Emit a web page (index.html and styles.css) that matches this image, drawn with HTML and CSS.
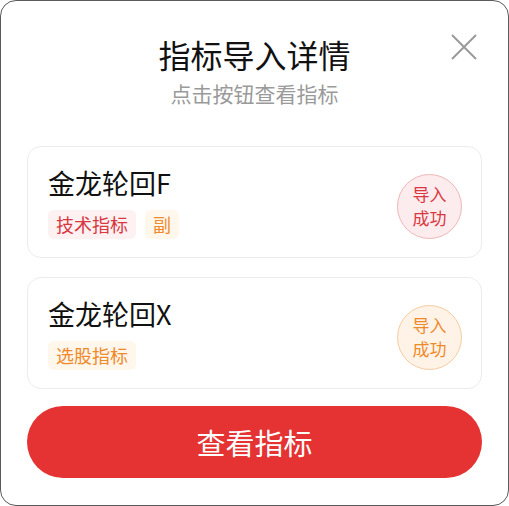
FILE: index.html
```html
<!DOCTYPE html>
<html lang="zh-CN">
<head>
    <meta charset="UTF-8">
    <meta name="viewport" content="width=device-width, initial-scale=1.0">
    <title>指标导入详情</title>
    <link rel="stylesheet" href="styles.css">
</head>
<body>
    <div class="dialog">
        <!-- 标题 -->
        <div class="dialog-header">
            <div class="dialog-title">指标导入详情</div>
            <div class="dialog-subtitle">点击按钮查看指标</div>
            <button class="close-btn" aria-label="关闭">
                <svg width="26" height="26" viewBox="0 0 26 26">
                    <path d="M1 1 L25 25 M25 1 L1 25" stroke="#9a9a9a" stroke-width="2" fill="none"/>
                </svg>
            </button>
        </div>

        <!-- 指标列表 -->
        <div class="indicator-list">
            <div class="indicator-card">
                <div class="indicator-info">
                    <div class="indicator-name">金龙轮回F</div>
                    <div class="tag-row">
                        <span class="tag tag-red">技术指标</span>
                        <span class="tag tag-orange">副</span>
                    </div>
                </div>
                <div class="status status-red">导入<br>成功</div>
            </div>

            <div class="indicator-card">
                <div class="indicator-info">
                    <div class="indicator-name">金龙轮回X</div>
                    <div class="tag-row">
                        <span class="tag tag-orange">选股指标</span>
                    </div>
                </div>
                <div class="status status-orange">导入<br>成功</div>
            </div>
        </div>

        <button class="view-btn">查看指标</button>
    </div>
</body>
</html>
```

FILE: styles.css
```css
* {
    margin: 0;
    padding: 0;
    box-sizing: border-box;
    font-family: 'Noto Sans CJK SC', 'Noto Sans', sans-serif;
}

body {
    background-color: #ffffff;
    width: 509px;
    height: 506px;
    overflow: hidden;
}

.dialog {
    width: 509px;
    height: 506px;
    background: white;
    border: 1px solid #5a5a5a;
    border-radius: 16px;
    padding: 0 26px;
}

.dialog-header {
    position: relative;
    padding-top: 32px;
    text-align: center;
}

.dialog-title {
    font-size: 32px;
    line-height: 42px;
    color: #111;
    font-weight: 400;
}

.dialog-subtitle {
    font-size: 21px;
    line-height: 30px;
    color: #9a9a9a;
    margin-top: 3px;
}

.close-btn {
    position: absolute;
    top: 33px;
    right: 5px;
    width: 26px;
    height: 26px;
    background: none;
    border: none;
    cursor: pointer;
}

.close-btn svg {
    display: block;
}

.indicator-list {
    display: flex;
    flex-direction: column;
    gap: 19px;
    margin-top: 38px;
}

.indicator-card {
    display: flex;
    align-items: center;
    justify-content: space-between;
    height: 112px;
    padding: 17px 19px 18px 20px;
    border: 1px solid #ececec;
    border-radius: 14px;
}

.indicator-name {
    font-size: 27px;
    line-height: 36px;
    color: #111;
}

.tag-row {
    display: flex;
    gap: 9px;
    margin-top: 9px;
}

.tag {
    font-size: 18px;
    line-height: 21px;
    padding: 4px 8px;
    border-radius: 6px;
}

.tag-red {
    color: #d8373f;
    background: #fdf1f1;
}

.tag-orange {
    color: #ef8a2a;
    background: #fff6ec;
}

.status {
    width: 65px;
    height: 65px;
    margin-top: 9px;
    border-radius: 50%;
    display: flex;
    align-items: center;
    justify-content: center;
    text-align: center;
    font-size: 17px;
    line-height: 24px;
}

.status-red {
    color: #d8373f;
    background: #fdeced;
    border: 1px solid #eeb6b9;
}

.status-orange {
    color: #ef8a2a;
    background: #fff3e8;
    border: 1px solid #f5cb9f;
}

.view-btn {
    display: block;
    width: 100%;
    height: 72px;
    margin-top: 17px;
    border: none;
    border-radius: 36px;
    background: #e53233;
    color: white;
    font-size: 29px;
    cursor: pointer;
}
```
